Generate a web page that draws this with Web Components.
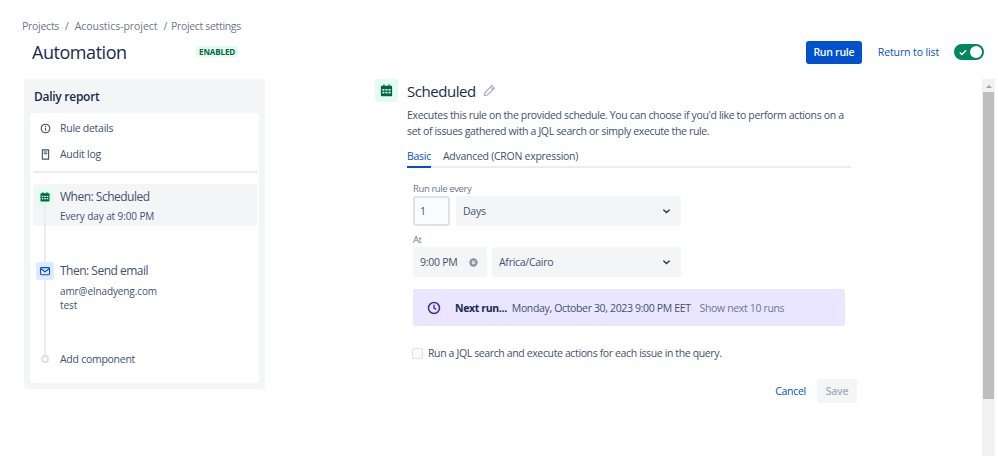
<!DOCTYPE html>
<html>
<head>
<meta charset="utf-8">
<title>Automation</title>
<style>
  html, body { margin: 0; padding: 0; background: #fff; overflow: hidden; }
  body { font-family: "Open Sans", "Noto Sans", sans-serif; color: #172b4d; letter-spacing: -.27px; }
</style>
</head>
<body>
<auto-page></auto-page>
<script>
const CALENDAR = `<svg viewBox="0 0 16 16" width="100%" height="100%"><path fill="currentColor" d="M3 3h1.6V1.6h1.4V3h4V1.6h1.4V3H13a1 1 0 0 1 1 1v9a1 1 0 0 1-1 1H3a1 1 0 0 1-1-1V4a1 1 0 0 1 1-1z"/><g fill="#e3fcef"><rect x="3.6" y="6.4" width="2.2" height="1.7"/><rect x="6.9" y="6.4" width="2.2" height="1.7"/><rect x="10.2" y="6.4" width="2.2" height="1.7"/><rect x="3.6" y="9.4" width="2.2" height="1.7"/><rect x="6.9" y="9.4" width="2.2" height="1.7"/><rect x="10.2" y="9.4" width="2.2" height="1.7"/></g></svg>`;
const MAIL = `<svg viewBox="0 0 16 16" width="100%" height="100%"><rect x="2" y="3.5" width="12" height="9.5" rx="1.2" fill="none" stroke="currentColor" stroke-width="1.5"/><path d="M2.6 5l5.4 4 5.4-4" fill="none" stroke="currentColor" stroke-width="1.5"/></svg>`;
const CHEVRON = `<svg viewBox="0 0 10 6" width="7" height="5"><path d="M1 1l4 3.6L9 1" fill="none" stroke="#253858" stroke-width="2" stroke-linecap="round"/></svg>`;

class AutoPage extends HTMLElement {
  constructor() {
    super();
    const shadow = this.attachShadow({ mode: "open" });
    shadow.innerHTML = `
      <style>
        :host { display: flex; flex-direction: column; width: 998px; height: 456px; overflow: hidden; }
        .main { display: flex; flex: 1; min-height: 0; padding-left: 24px; }
      </style>
      <page-header></page-header>
      <div class="main">
        <rule-sidebar></rule-sidebar>
        <schedule-panel></schedule-panel>
        <fake-scrollbar></fake-scrollbar>
      </div>
    `;
  }
}

class PageHeader extends HTMLElement {
  constructor() {
    super();
    const shadow = this.attachShadow({ mode: "open" });
    shadow.innerHTML = `
      <style>
        :host { display: block; height: 79px; padding: 19px 14px 0 22px; box-sizing: border-box; }
        .crumbs { display: flex; gap: 6px; font-size: 10.5px; line-height: 14px; color: #6b778c; }
        .crumbs .wide { letter-spacing: -.05px; }
        .crumbs .last { margin-left: -2px; letter-spacing: -.33px; }
        .row { display: flex; align-items: center; height: 24px; margin-top: 7px; padding-left: 10px; }
        h1 { margin: 0; font-size: 18px; font-weight: 500; line-height: 24px; width: 164px; letter-spacing: -.45px; }
        .badge { font-size: 8px; font-weight: 700; line-height: 11px; padding: 0 3px; background: #e3fcef; color: #006644; border-radius: 2px; letter-spacing: -.1px; margin-top: -1px; }
        .actions { margin-left: auto; display: flex; align-items: center; }
        .run { background: #0052cc; color: #fff; font-size: 10.5px; font-weight: 600; height: 23px; width: 56px; display: flex; align-items: center; justify-content: center; border-radius: 3px; }
        .back { color: #0052cc; font-size: 10.5px; margin: 0 15px 0 16px; letter-spacing: -.12px; }
        .toggle { width: 30px; height: 16px; border-radius: 8px; background: #00875a; display: flex; align-items: center; justify-content: space-between; padding: 0 2px 0 5px; box-sizing: border-box; }
        .knob { width: 12px; height: 12px; border-radius: 50%; background: #fff; }
      </style>
      <div class="crumbs"><span>Projects</span><span>/</span><span class="wide">Acoustics-project</span><span>/</span><span class="last">Project settings</span></div>
      <div class="row">
        <h1>Automation</h1>
        <span class="badge">ENABLED</span>
        <div class="actions">
          <div class="run">Run rule</div>
          <div class="back">Return to list</div>
          <div class="toggle">
            <svg viewBox="0 0 10 8" width="8" height="7"><path d="M1 4l2.6 2.6L9 1.2" fill="none" stroke="#fff" stroke-width="1.7"/></svg>
            <div class="knob"></div>
          </div>
        </div>
      </div>
    `;
  }
}

class RuleSidebar extends HTMLElement {
  constructor() {
    super();
    const shadow = this.attachShadow({ mode: "open" });
    shadow.innerHTML = `
      <style>
        :host { display: block; width: 241px; height: 310px; background: #f4f5f7; border-radius: 4px; box-sizing: border-box; padding: 0 6px 6px; flex: none; }
        .title { height: 34px; display: flex; align-items: center; padding-left: 4px; font-size: 12px; font-weight: 600; }
        .card { background: #fff; border-radius: 4px; height: 270px; padding: 2px 2px 0 3px; box-sizing: border-box; font-size: 10.5px; color: #42526e; }
        .link { display: flex; align-items: center; height: 26px; }
        .link svg { width: 11px; height: 11px; margin-left: 7px; margin-right: 9px; color: #42526e; }
        hr { border: 0; height: 2px; background: #ebecf0; margin: 4px 0 11px; }
      </style>
      <div class="title">Daliy report</div>
      <div class="card">
        <div class="link"><svg viewBox="0 0 12 12"><circle cx="6" cy="6" r="4.7" fill="none" stroke="currentColor" stroke-width="1.2"/><rect x="5.4" y="5.2" width="1.2" height="3.2" fill="currentColor"/><rect x="5.4" y="3.3" width="1.2" height="1.2" fill="currentColor"/></svg>Rule details</div>
        <div class="link"><svg viewBox="0 0 12 12"><path fill="none" stroke="currentColor" stroke-width="1.2" d="M2.6 1h6.8v10H2.6z"/><path stroke="currentColor" stroke-width="1.2" d="M4 3.2h4M4 5.2h4"/></svg>Audit log</div>
        <hr>
        <rule-step kind="when" heading="When: Scheduled" active>
          Every day at 9:00 PM
        </rule-step>
        <rule-step kind="then" heading="Then: Send email">
          amr@elnadyeng.com<br>test
        </rule-step>
        <rule-step kind="add" heading="Add component"></rule-step>
      </div>
    `;
  }
}

class RuleStep extends HTMLElement {
  constructor() {
    super();
    this.attachShadow({ mode: "open" });
  }
  connectedCallback() {
    const kind = this.getAttribute("kind");
    const heading = this.getAttribute("heading");
    const glyph = kind === "when" ? CALENDAR : kind === "then" ? MAIL : "";
    this.shadowRoot.innerHTML = `
      <style>
        :host { display: grid; grid-template-columns: 27px 1fr; grid-template-rows: 42px auto; height: 78px; }
        :host([kind="then"]) { height: 90px; }
        :host([kind="add"]) { height: 14px; grid-template-rows: 14px; }
        .hl { grid-area: 1 / 1 / 2 / 3; border-radius: 3px; }
        :host([active]) .hl { background: #f4f5f7; }
        .rail { grid-area: 1 / 1 / 3 / 2; display: flex; flex-direction: column; align-items: center; width: 24px; margin-top: 4px; z-index: 1; }
        :host([kind="then"]) .rail, :host([kind="add"]) .rail { margin-top: 0; }
        .icon { width: 18px; height: 18px; border-radius: 2px; padding: 3px; box-sizing: border-box; flex: none; }
        :host([kind="when"]) .icon { background: #e3fcef; color: #006644; }
        :host([kind="then"]) .icon { background: #deebff; color: #0052cc; }
        .line { width: 2px; flex: 1; background: #ebecf0; }
        .stub { width: 2px; height: 3px; background: #ebecf0; flex: none; }
        .dot { width: 8px; height: 8px; border-radius: 50%; border: 2px solid #dfe1e6; box-sizing: border-box; background: #fff; flex: none; }
        .body { grid-area: 1 / 2 / 3 / 3; z-index: 1; padding-top: 5px; }
        :host([kind="then"]) .body { padding-top: 1px; }
        :host([kind="add"]) .body { padding-top: 0; }
        h4 { margin: 0; font-weight: 400; font-size: 12px; line-height: 16px; color: #42526e; letter-spacing: -.5px; }
        :host([kind="add"]) h4 { font-size: 10.5px; line-height: 14px; letter-spacing: inherit; }
        .text { font-size: 10px; line-height: 13.5px; margin-top: 5px; color: #42526e; letter-spacing: -.1px; }
        :host([kind="then"]) .text { margin-top: 6px; }
      </style>
      <div class="hl"></div>
      <div class="rail">${kind === "add" ? '<div class="stub"></div><div class="dot"></div>' : `<div class="icon">${glyph}</div><div class="line"></div>`}</div>
      <div class="body">
        <h4>${heading}</h4>
        ${kind === "add" ? "" : '<div class="text"><slot></slot></div>'}
      </div>
    `;
  }
}

class SchedulePanel extends HTMLElement {
  constructor() {
    super();
    const shadow = this.attachShadow({ mode: "open" });
    shadow.innerHTML = `
      <style>
        :host { display: block; flex: 1; padding-left: 110px; font-size: 10.5px; color: #42526e; }
        .head { display: flex; align-items: center; height: 23px; }
        .head .big { width: 23px; height: 23px; background: #e3fcef; color: #006644; padding: 4px; box-sizing: border-box; border-radius: 2px; margin-right: 9px; }
        h2 { margin: 0; font-size: 15px; font-weight: 500; color: #172b4d; letter-spacing: -.45px; }
        .head .pen { margin-left: 7px; width: 13px; height: 13px; }
        .content { padding-left: 32px; width: 444px; }
        p { margin: 5px 0 0; line-height: 16px; letter-spacing: -.35px; }
        .tabs { display: flex; gap: 12px; margin-top: 9px; height: 18px; border-bottom: 2px solid #ebecf0; font-weight: 500; line-height: 17px; }
        .tabs .on { color: #0052cc; border-bottom: 2px solid #0052cc; height: 18px; }
        .form { padding-left: 6px; }
        label { display: block; font-size: 9.5px; color: #6b778c; line-height: 12px; letter-spacing: -.4px; }
        .l1 { margin-top: 15px; }
        .fields { display: flex; gap: 6px; margin-top: 1px; height: 30px; }
        .l2 { margin-top: 8px; }
        .fields.f2 { gap: 5px; margin-top: 1px; }
        .box { background: #f4f5f7; border-radius: 3px; height: 100%; box-sizing: border-box; display: flex; align-items: center; justify-content: space-between; padding: 0 11px 0 7px; font-size: 10.5px; color: #42526e; }
        .num { width: 37px; background: #fafbfc; border: 2px solid #dfe1e6; padding-left: 5px; }
        .days { width: 225px; }
        .time { width: 74px; padding-right: 9px; }
        .zone { width: 189px; }
        .banner { margin-top: 12px; width: 432px; height: 37px; background: #eae6ff; border-radius: 2px; display: flex; align-items: center; padding-left: 14px; box-sizing: border-box; letter-spacing: -.35px; }
        .banner svg { width: 14px; height: 14px; margin-right: 14px; }
        .banner b { color: #172b4d; margin-right: 5px; font-weight: 700; }
        .banner .more { margin-left: 9px; color: #6b778c; font-weight: 500; }
        .check { display: flex; align-items: center; margin-top: 20px; height: 14px; margin-left: -1px; letter-spacing: -.37px; }
        .check i { width: 9px; height: 9px; border: 1px solid #dfe1e6; border-radius: 2px; background: #fafbfc; margin-right: 5px; }
        .foot { display: flex; justify-content: flex-end; align-items: center; margin-top: 19px; width: 450px; }
        .cancel { color: #0052cc; font-weight: 500; margin-right: 11px; }
        .save { width: 40px; height: 24px; border-radius: 3px; background: #f4f5f7; color: #a5adba; font-weight: 600; display: flex; align-items: center; justify-content: center; }
      </style>
      <div class="head">
        <div class="big">${CALENDAR}</div>
        <h2>Scheduled</h2>
        <svg class="pen" viewBox="0 0 14 14"><path d="M9.5 1.8l2.7 2.7-7.4 7.4-3.3.6.6-3.3z" fill="none" stroke="#a5adba" stroke-width="1.3"/><path d="M8 3.4l2.7 2.7" stroke="#a5adba" stroke-width="1.3"/></svg>
      </div>
      <div class="content">
        <p>Executes this rule on the provided schedule. You can choose if you'd like to perform actions on a set of issues gathered with a JQL search or simply execute the rule.</p>
        <div class="tabs"><span class="on">Basic</span><span>Advanced (CRON expression)</span></div>
        <div class="form">
          <label class="l1">Run rule every</label>
          <div class="fields">
            <div class="box num">1</div>
            <div class="box days">Days ${CHEVRON}</div>
          </div>
          <label class="l2">At</label>
          <div class="fields f2">
            <div class="box time">9:00 PM
              <svg viewBox="0 0 10 10" width="9" height="9"><circle cx="5" cy="5" r="4.6" fill="#8993a4"/><path d="M3.3 3.3l3.4 3.4M6.7 3.3L3.3 6.7" stroke="#f4f5f7" stroke-width="1.2"/></svg>
            </div>
            <div class="box zone">Africa/Cairo ${CHEVRON}</div>
          </div>
          <div class="banner">
            <svg viewBox="0 0 14 14"><circle cx="7" cy="7" r="5.5" fill="none" stroke="#403294" stroke-width="1.5"/><path d="M7 3.8V7l2.2 1.4" fill="none" stroke="#403294" stroke-width="1.4"/></svg>
            <b>Next run...</b><span>Monday, October 30, 2023 9:00 PM EET</span><span class="more">Show next 10 runs</span>
          </div>
          <div class="check"><i></i>Run a JQL search and execute actions for each issue in the query.</div>
        </div>
        <div class="foot"><span class="cancel">Cancel</span><span class="save">Save</span></div>
      </div>
    `;
  }
}

class FakeScrollbar extends HTMLElement {
  constructor() {
    super();
    const shadow = this.attachShadow({ mode: "open" });
    shadow.innerHTML = `
      <style>
        :host { display: flex; flex-direction: column; width: 13px; margin-right: 3px; background: #f1f1f1; flex: none; align-items: center; }
        .arrow { height: 13px; display: flex; align-items: center; }
        .arrow i { width: 0; height: 0; border: 3px solid transparent; border-top: 0; border-bottom: 3px solid #a3a3a3; margin-top: 2px; }
        .thumb { width: 11px; height: 307px; background: #bdbdbd; }
      </style>
      <div class="arrow"><i></i></div>
      <div class="thumb"></div>
    `;
  }
}

customElements.define("auto-page", AutoPage);
customElements.define("page-header", PageHeader);
customElements.define("rule-sidebar", RuleSidebar);
customElements.define("rule-step", RuleStep);
customElements.define("schedule-panel", SchedulePanel);
customElements.define("fake-scrollbar", FakeScrollbar);
</script>
</body>
</html>
